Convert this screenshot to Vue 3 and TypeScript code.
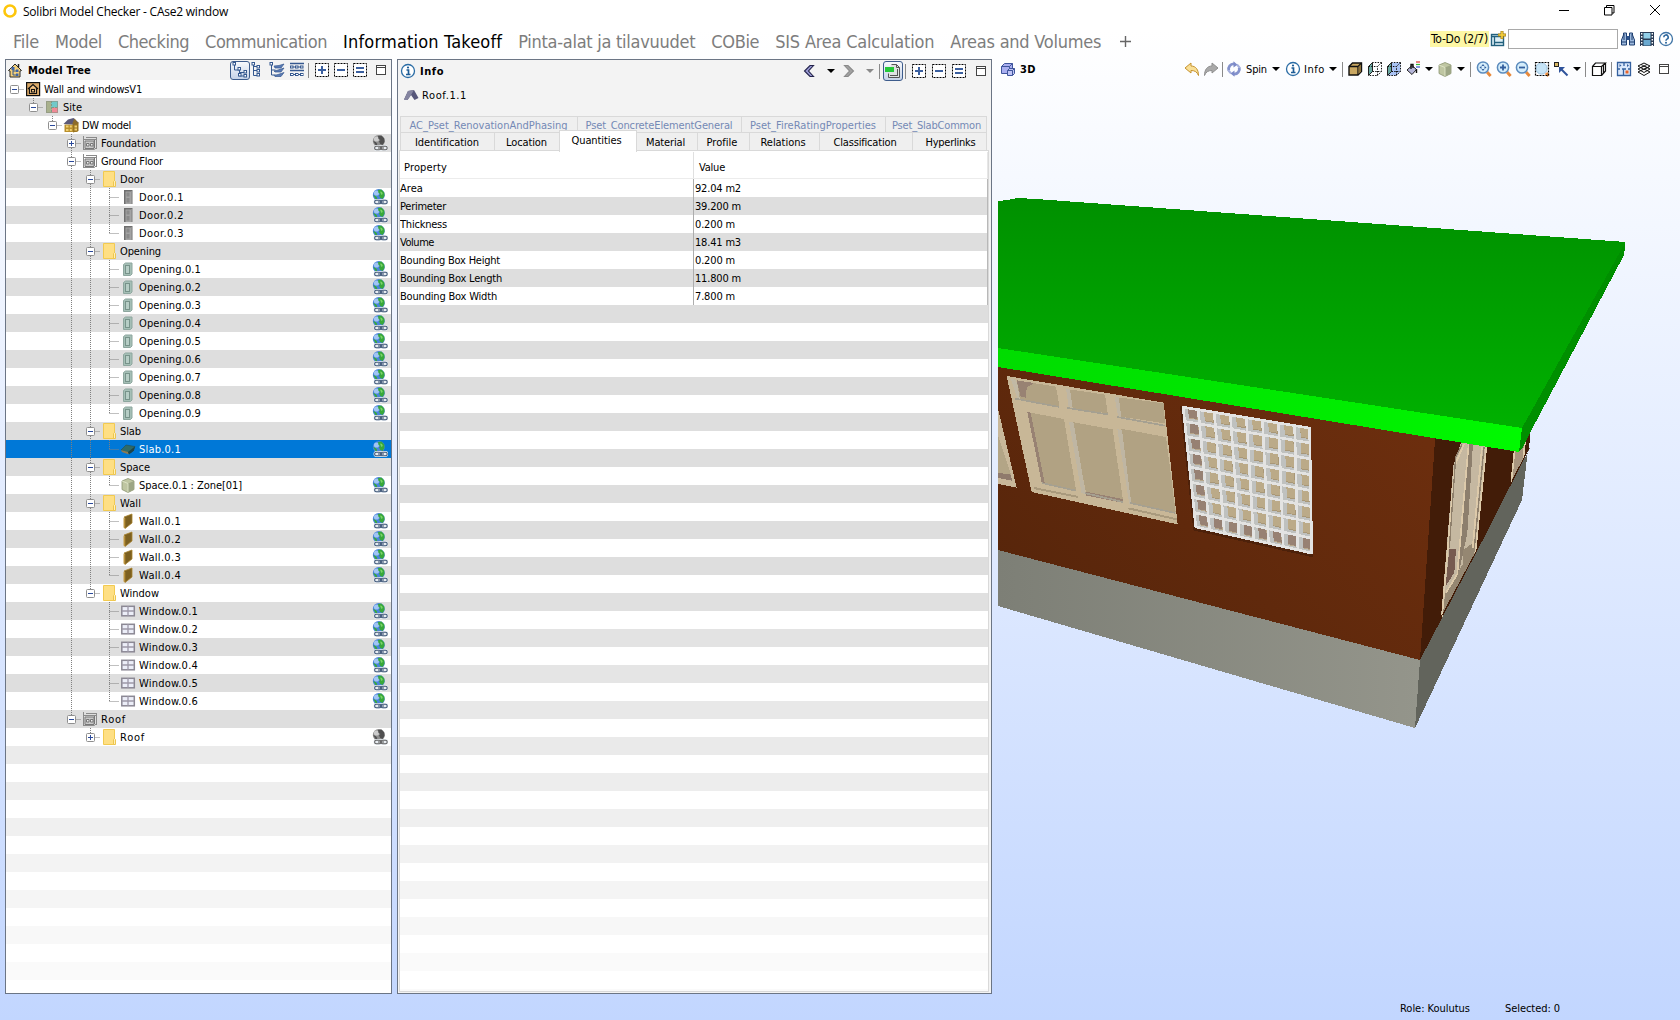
<script setup lang="ts">
import type { Directive } from 'vue'

interface Node { name: string; w: number; icon: string; link?: 'on' | 'off'; open?: boolean; kids?: Node[]; selected?: boolean }
interface Row { name: string; w: number; icon: string; link?: string; depth: number; last: boolean; lines: number[]; box: '' | '+' | '-'; selected: boolean }
interface Tool { kind: 'icon' | 'sep' | 'arrow' | 'text'; span: number; icon?: string; text?: string; w?: number }

// Tracks a label out to its nominal width.
const vFit: Directive<HTMLElement, number> = {
  mounted(el, binding) {
    const n = (el.textContent ?? '').length
    if (n) el.style.letterSpacing = `${(binding.value - el.getBoundingClientRect().width) / n}px`
  },
}

const series = (base: string, w: number, icon: string, n: number): Node[] =>
  Array.from({ length: n }, (_, i) => ({ name: `${base}.0.${i + 1}`, w, icon, link: 'on' as const }))

const tree: Node = {
  name: 'Wall and windowsV1', w: 98, icon: 'project', kids: [{
    name: 'Site', w: 19, icon: 'site', kids: [{
      name: 'DW model', w: 49, icon: 'building', kids: [
        { name: 'Foundation', w: 55, icon: 'storey', link: 'off', kids: [], open: false },
        {
          name: 'Ground Floor', w: 62, icon: 'storey', kids: [
            { name: 'Door', w: 24, icon: 'folder', kids: series('Door', 45, 'door', 3) },
            { name: 'Opening', w: 41, icon: 'folder', kids: series('Opening', 62, 'opening', 9) },
            { name: 'Slab', w: 21, icon: 'folder', kids: [{ name: 'Slab.0.1', w: 42, icon: 'slab', link: 'on', selected: true }] },
            { name: 'Space', w: 30, icon: 'folder', kids: [{ name: 'Space.0.1 : Zone[01]', w: 103, icon: 'space', link: 'on' }] },
            { name: 'Wall', w: 21, icon: 'folder', kids: series('Wall', 42, 'wall', 4) },
            { name: 'Window', w: 39, icon: 'folder', kids: series('Window', 59, 'window', 6) },
          ],
        },
        { name: 'Roof', w: 25, icon: 'storey', kids: [{ name: 'Roof', w: 25, icon: 'folder', link: 'off', kids: [], open: false }] },
      ],
    }],
  }],
}

const rows: Row[] = []
function walk(n: Node, depth: number, last: boolean, lines: number[]) {
  rows.push({ name: n.name, w: n.w, icon: n.icon, link: n.link, depth, last, lines, box: n.kids ? (n.open === false ? '+' : '-') : '', selected: !!n.selected })
  n.kids?.forEach((k, i, all) => walk(k, depth + 1, i === all.length - 1, last ? lines : [...lines, depth]))
}
walk(tree, 0, true, [])

const shade = (y: number) => {
  const v = Math.round(222 + 28 * Math.min(1, Math.max(0, (y - 560) / 400)))
  return `rgb(${v},${v},${v})`
}
const treeFill = Array.from({ length: 14 }, (_, i) => ((i + 37) % 2 ? shade(80 + (i + 37) * 18) : '#fff'))
const infoFill = Array.from({ length: 39 }, (_, i) => ((i + 7) % 2 ? shade(179 + (i + 7) * 18) : '#fff'))

const menu = [
  { t: 'File', w: 26 }, { t: 'Model', w: 47 }, { t: 'Checking', w: 71 }, { t: 'Communication', w: 122 },
  { t: 'Information Takeoff', w: 159, on: true }, { t: 'Pinta-alat ja tilavuudet', w: 177 }, { t: 'COBie', w: 48 },
  { t: 'SIS Area Calculation', w: 159 }, { t: 'Areas and Volumes', w: 151 },
]
const psets = [
  { t: 'AC_Pset_RenovationAndPhasing', w: 158, c: 'p1' }, { t: 'Pset_ConcreteElementGeneral', w: 147, c: 'p2' },
  { t: 'Pset_FireRatingProperties', w: 126, c: 'p3' }, { t: 'Pset_SlabCommon', w: 89, c: 'p4' },
]
const tabs = [
  { t: 'Identification', w: 64, c: 't1' }, { t: 'Location', w: 41, c: 't2' }, { t: 'Quantities', w: 50, c: 't3' },
  { t: 'Material', w: 39, c: 't4' }, { t: 'Profile', w: 31, c: 't5' }, { t: 'Relations', w: 45, c: 't6' },
  { t: 'Classification', w: 63, c: 't7' }, { t: 'Hyperlinks', w: 50, c: 't8' },
]
const props = [
  ['Area', 23, '92.04 m2', 46], ['Perimeter', 46, '39.200 m', 46], ['Thickness', 47, '0.200 m', 40], ['Volume', 34, '18.41 m3', 46],
  ['Bounding Box Height', 100, '0.200 m', 40], ['Bounding Box Length', 102, '11.800 m', 46], ['Bounding Box Width', 97, '7.800 m', 40],
] as [string, number, string, number][]

const I = (icon: string, span = 19): Tool => ({ kind: 'icon', icon, span })
const S = (span = 5): Tool => ({ kind: 'sep', span })
const D = (span = 15): Tool => ({ kind: 'arrow', span })
const viewTools: Tool[] = [
  I('undo'), I('redo'), S(4), I('spin', 20), { kind: 'text', text: 'Spin', w: 21, span: 24 }, D(), I('info'),
  { kind: 'text', text: 'Info', w: 21, span: 23 }, D(), S(), I('solid', 20), I('wire'), I('trans'), I('paint', 20), D(12),
  I('space'), D(14), S(), I('zfit', 21), I('zin'), I('zout'), I('zsel'), I('goto'), D(13), S(), I('cut', 21), S(4),
  I('floor', 22), I('layers', 17), I('max', 24),
]

const dash = '<rect x="1.5" y="1.5" width="13" height="13" fill="#fff" stroke="#000" stroke-dasharray="2 1"/>'
const lens = '<path d="M11 11l3.6 4" stroke="#e88a3c" stroke-width="3"/><circle cx="7" cy="6.5" r="5.6" fill="#d5edfb" stroke="#5b8bbd" stroke-width="1.5"/>'
const chain = (c: string) => `<g fill="none" stroke="#e8edf2" stroke-width="3.4"><rect x="3.2" y="11.6" width="5.6" height="2.6" rx="1.3"/><rect x="9.6" y="11.6" width="5" height="2.6" rx="1.3"/></g><g fill="none" stroke="${c}" stroke-width="1.1"><rect x="2.6" y="11.2" width="6.4" height="3.6" rx="1.8"/><rect x="9" y="11.2" width="6.2" height="3.6" rx="1.8"/><path d="M6 13h6"/></g>`
const nodes = (x: number, y: number) => `<rect x="${x}" y="${y}" width="2.500" height="2.500" fill="#fff" stroke="#35588f"/>`
const icons: Record<string, string> = {
  project: '<rect x="1.6" y="1.6" width="13" height="13" fill="#dba968" stroke="#111" stroke-width="1.2"/><path d="M3 8l5-4.5L13 8M4.5 7.5v5h7v-5" fill="#f0c284" stroke="#111" stroke-width="1.2"/><rect x="6.5" y="8.5" width="3" height="2.5" fill="none" stroke="#111"/>',
  site: '<rect x="2" y="2" width="12" height="12" fill="#a9b18d"/><rect x="7" y="2" width="7" height="6" fill="#71c9c9"/><rect x="8" y="8.5" width="6" height="5.5" fill="#f08a96"/><path d="M7.5 2v12M8 8.5h6" stroke="#7d9a88" stroke-dasharray="2 1"/><rect x="2.5" y="2.5" width="11" height="11" fill="none" stroke="#8b8f80" stroke-opacity=".6"/>',
  building: '<path d="M1.500 7.500h13v7.500h-13z" fill="#b98f2c"/><path d="M10 7l5.5-2v9L10 15.500z" fill="#987322"/><path d="M0.500 7l4.500-4.500L10.500 1l5 4.500-5 2z" fill="#5c5a78"/><path d="M9 7.500l2.500-6 4 5z" fill="#8d6c2a"/><g fill="#f0d070"><rect x="3" y="8.500" width="2.500" height="2"/><rect x="6.800" y="8.500" width="2" height="2"/><rect x="3" y="12" width="2.500" height="2"/><rect x="6.800" y="12" width="2" height="2"/><rect x="11.500" y="8.500" width="2.500" height="2"/><rect x="11.500" y="11.500" width="2.500" height="2"/></g>',
  storey: '<path d="M1 14.500h11.500l2-2V2.500" fill="none" stroke="#8d8d8d"/><path d="M1.500 1v14M14.500 2v12M1 4.500h13M4 2.500h11" stroke="#8a8a8a" fill="none"/><path d="M3 6h9v7.500H3z" fill="#c9c9c9" stroke="#787878"/><path d="M4.500 8.500h2.500v2.500H4.500zM8.500 8.500h2.500v2.500H8.500z" fill="#eee" stroke="#777"/><path d="M12.500 5v8" stroke="#777"/>',
  folder: '<path d="M2.500 .500h11v15h-11z" fill="#fedf84" stroke="#f2ca50"/><path d="M14.500 15.500h-2v-5l1-1 1 1z" fill="#fff0b8" stroke="#edc54e"/>',
  door: '<rect x="4" y="1" width="8.500" height="14" fill="#6e6e6e"/><rect x="5.500" y="2.500" width="5.500" height="12.500" fill="#a3a3a3"/><rect x="6.500" y="3.500" width="3" height="4" fill="#8a8a8a"/><rect x="6.500" y="9" width="3" height="4.500" fill="#8a8a8a"/><path d="M12 2v13" stroke="#b5b5b5"/>',
  opening: '<path d="M3.500 3.500l2-1.500h6.500v11l-1.500 1.500h-7z" fill="#a5bfb6" stroke="#8da69e"/><rect x="5.500" y="4.500" width="4" height="8" fill="#b6cdc5" stroke="#77938a"/>',
  slab: '<path d="M1 9l5-5 9 1.500-3 5.500-4 1z" fill="#2f6b67" stroke="#274f52" stroke-width=".6"/><path d="M1 9l7 2 1 2.500-7-2.500z" fill="#8e7b52"/><path d="M8 11l7-5.500-1 4-5 4z" fill="#1f4448"/>',
  space: '<path d="M2 4l6-2.500 6 2.500v8.500L8 15.500 2 12.500z" fill="#bfc6a2" stroke="#8b9471" stroke-width=".8"/><path d="M8 6.500l6-2.500v8.500l-6 3z" fill="#9da685"/><path d="M2 4l6 2.500v9" fill="none" stroke="#e0e5c8" stroke-width=".9"/>',
  wall: '<path d="M3.500 4.500l1.500 1v10l-1.500-1z" fill="#c39a45"/><path d="M4 4L12 1v9l-7 5.500V5z" fill="#7c6021" stroke="#a8832f" stroke-width=".8"/>',
  window: '<rect x="1.800" y="3.300" width="12.500" height="9.500" fill="#eceef8" stroke="#8b8894" stroke-width="1.500"/><path d="M8 3v10M2 8h12" stroke="#9d99a8" stroke-width="1.300"/>',
  on: '<circle cx="6.800" cy="6" r="6" fill="#4a83dc"/><circle cx="4.500" cy="4" r="2.600" fill="#b5d6fa" opacity=".8"/><path d="M6 1l3.500-.5 2.800 3 .2 3.500-2 3-2.500-1.200-1-2.500 1.500-1.300-2-1zM1.200 6l2.500 1 1.600 2-1 2.200z" fill="#38a83a"/><path d="M8 2.500l2 .5.800 2-1.500 1z" fill="#7ad468"/>' + chain('#3c5577'),
  off: '<circle cx="6.800" cy="6" r="6" fill="#8e8e8e"/><circle cx="4.500" cy="4" r="2.600" fill="#dcdcdc" opacity=".8"/><path d="M6 1l3.500-.5 2.800 3 .2 3.500-2 3-2.500-1.200-1-2.500 1.500-1.300-2-1zM1.200 6l2.500 1 1.600 2-1 2.200z" fill="#505050"/>' + chain('#606060'),
  home: '<path d="M1.500 8.500L8 2l6.500 6.500-1.500.5v6H3V9z" fill="#f3cf79" stroke="#2a2a2a"/><path d="M11.500 2v3.500" stroke="#222" stroke-width="1.500"/><path d="M6 6v7h4M6 9h4" fill="none" stroke="#35588f"/><g fill="#3c64a8"><rect x="4.500" y="5" width="3" height="3"/><rect x="9" y="7.500" width="2.500" height="2.500"/><rect x="9" y="11.500" width="2.500" height="2.500"/></g>',
  tree1: '<path d="M2.500 3v5h5M7.500 7v7h5M7.500 10.500h5" fill="none" stroke="#35588f"/>' + nodes(1, .5) + nodes(6, 5.5) + nodes(12, 8.500) + nodes(12, 12.500) + nodes(6.500, 11.500),
  tree2: '<path d="M5.500 3v10.500h4M5.500 8.500h4M5.500 4.500h4" fill="none" stroke="#35588f"/>' + nodes(4, .5) + nodes(9, 3.5) + nodes(9, 7.500) + nodes(9, 11.500),
  tree3: '<path d="M2.500 3v10h4M2.500 8h4" fill="none" stroke="#35588f"/>' + nodes(1, .5) + '<path d="M5 4l5-.500 5-1.500-3 4H6zM5 9l4-1 6-2-3 4H6zM5 13.500l4-1 6-2-3 4H6z" fill="#5b7cb5" stroke="#35588f" stroke-width=".7"/>',
  tree4: '<path d="M1 1.500h14M1 8.500h14" stroke="#35588f" stroke-width="1.600"/><path d="M3 5h10M3 12.500h10" stroke="#35588f"/><g fill="#fff" stroke="#35588f"><rect x="1.500" y="4" width="2.500" height="2"/><rect x="6.500" y="4" width="2.500" height="2"/><rect x="11.500" y="4" width="2.500" height="2"/><rect x="1.500" y="11.500" width="2.500" height="2"/><rect x="6.500" y="11.500" width="2.500" height="2"/><rect x="11.500" y="11.500" width="2.500" height="2"/></g>',
  plus: dash + '<path d="M4 8h8M8 4v8" stroke="#3a5f9f" stroke-width="2"/>',
  minus: dash + '<path d="M4 8h8" stroke="#3a5f9f" stroke-width="2"/>',
  equal: dash + '<path d="M4 6h8M4 10h8" stroke="#3a5f9f" stroke-width="2"/>',
  max: '<rect x="3.500" y="3.500" width="9" height="9" fill="#fff" stroke="#444"/><path d="M3 5.500h10" stroke="#444"/>',
  info: '<circle cx="8" cy="8" r="6.500" fill="#fff" stroke="#2a6ca5" stroke-width="1.300"/><path d="M6.500 7h2v4.500M6 11.500h4.500" stroke="#1d5c96" stroke-width="1.700" fill="none"/><circle cx="8" cy="4.500" r="1.100" fill="#1d5c96"/>',
  roof: '<path d="M1 12.500L5 4l6-1 4.500 8-4 2L8 8l-3.500 5z" fill="#56567a"/><path d="M5 4l6-1-3 5-3.500 5H1z" fill="#8484a0"/>',
  back: '<path d="M9 2.500h3.500L7.500 8l5 5.500H9L3.500 8z" fill="#9a9ad4" stroke="#22224a" stroke-width="1.100"/>',
  fwd: '<path d="M7 2.500H3.500L8.500 8l-5 5.500H7L12.500 8z" fill="#a2a2a2" stroke="#8a8a8a" stroke-width="1.100"/>',
  page: '<path d="M6.500 1.500h5l3 3v10h-11v-4" fill="#dfe3e2" stroke="#555"/><path d="M11.500 1.500v3h3M5 12.500h7M12.500 6v7" fill="none" stroke="#555"/><rect x="0" y="4" width="9" height="5" fill="#24c93a"/>',
  cubes: '<path d="M1.500 5.500l3-3h8v7l-3 3h-8z" fill="#a9aef0" stroke="#3f559c"/><path d="M1.500 5.500h8v7M9.500 5.500l3-3" fill="none" stroke="#3f559c"/><path d="M7.500 9.500l2-2h5v5l-2 2h-5z" fill="#c0c4f6" stroke="#3f559c"/><path d="M7.500 9.500h5v5M12.500 9.500l2-2" fill="none" stroke="#3f559c"/>',
  undo: '<path d="M1 7l6-5v3c5 0 7.500 4 7.500 9.500C13 11 11 9.500 7 9.500V12z" fill="#f9df96" stroke="#c5922f"/>',
  redo: '<path d="M15 7L9 2v3C4 5 1.500 9 1.500 14.500 3 11 5 9.500 9 9.500V12z" fill="#a9a9a9" stroke="#8f8f8f"/>',
  spin: '<path d="M2.800 9.500A5.200 5.200 0 0 1 8 2.800M13.200 6.500A5.200 5.200 0 0 1 8 13.200" fill="none" stroke="#8492cc" stroke-width="2.800"/><path d="M7.500 .2l4 3.500-4 2.800zM8.500 9.500l-4 3 4 3.300z" fill="#7c8ac8"/><path d="M11 3.500l2.500 3M5 12.500l-2.500-3" stroke="#a5afdc" stroke-width="2"/>',
  solid: '<path d="M2 5.500l3.500-3.500h9v8.500L11 14H2z" fill="#caa862" stroke="#111" stroke-width="1.400"/><path d="M2 5.500h9V14M11 5.500L14.500 2" fill="none" stroke="#111" stroke-width="1.300"/><path d="M11.500 6l2.500-2.500v7l-2.500 2.500z" fill="#8b713c"/>',
  wire: '<path d="M1.500 5.500l4-4v9l-4 4z" fill="#6aa9a2" stroke="#222"/><path d="M1.500 5.500h9v9h-9M10.500 5.500l4-4h-9M14.500 1.500v9l-4 4M5.500 10.500h9" fill="none" stroke="#111" stroke-dasharray="1.500 1.200"/>',
  trans: '<path d="M1.500 5.500l4-4h9v9l-4 4h-9z" fill="#a9c3f4"/><path d="M1.500 5.500l4-4v9l-4 4z" fill="#6aa9a2" stroke="#222"/><path d="M1.500 5.500h9v9h-9M10.500 5.500l4-4h-9M14.500 1.500v9l-4 4M5.500 10.500h9" fill="none" stroke="#111" stroke-dasharray="1.500 1.200"/>',
  paint: '<path d="M2 9l5-4.500 4.500 4L7 13.500z" fill="#b4b5d8" stroke="#222"/><path d="M6 8V3.500h2V7M11.500 8v4" fill="none" stroke="#111" stroke-width="1.400"/><path d="M11 1h4" stroke="#d33" stroke-width="1.200"/><path d="M11 3.500h4" stroke="#3b3" stroke-width="1.200"/><path d="M11 6h4" stroke="#35c" stroke-width="1.200"/>',
  zfit: lens + '<path d="M7 3L8.500 5h-3zM7 10L5.500 8h3zM3.500 6.500L5.500 5v3zM10.500 6.500L8.500 8V5z" fill="#345f9e"/>',
  zin: lens + '<path d="M4 6.500h6M7 3.500v6" stroke="#345f9e" stroke-width="1.800"/>',
  zout: lens + '<path d="M4 6.500h6" stroke="#345f9e" stroke-width="1.800"/>',
  zsel: '<path d="M12 12l2.500 3" stroke="#e88a3c" stroke-width="3"/><circle cx="7.500" cy="7.500" r="5.600" fill="#c6e4f7" stroke="#9cc3e0"/><rect x="1.500" y="1.500" width="13" height="13" fill="none" stroke="#000" stroke-width="1.200" stroke-dasharray="2 1"/>',
  goto: '<rect x="1.500" y="1.500" width="4" height="4" fill="#d8b762" stroke="#222"/><path d="M14.500 14.500L8 8" stroke="#2f539b" stroke-width="2"/><path d="M6 6h6L6 12z" fill="#2f539b"/>',
  cut: '<path d="M1.500 5.500h9v9h-9zM1.500 5.500l3-3.500h10l-4 3.500M14.500 2v8l-4 4.500M12.500 4v8" fill="#fff" stroke="#111" stroke-width="1.200"/>',
  floor: '<path d="M1.500 1.500h13v13h-13z" fill="#dbe8fb" stroke="#35619f" stroke-width="1.300"/><path d="M1 8h3M6 8h4M7.500 8v6M12 8h3M8 1v4" stroke="#35619f" stroke-width="1.300"/><rect x="9.500" y="9.500" width="3" height="3" fill="#e8642b"/><path d="M3.500 3v3l2-1.500zM11 3v3l2-1.500z" fill="#35619f"/>',
  layers: '<path d="M2 11l6-3 6 3-6 3.500zM2 8l6-3 6 3-6 3.500zM2 5l6-3 6 3-6 3.500z" fill="#fff" stroke="#111"/><path d="M5 6.500l6-3M5 3.500l6 3M8 8l5-2" stroke="#111" stroke-width=".8"/>',
  todo: '<rect x="1.500" y="3.500" width="12" height="11" fill="#dff0f8" stroke="#23617e" stroke-width="1.400"/><path d="M1 5.500h13M4.500 6v9M5 11.500h9" stroke="#23617e" stroke-width="1.300"/><path d="M12 0v8M8 4h8" stroke="#a17c18" stroke-width="3"/><path d="M12 .500v7M8.500 4h7" stroke="#f5cf3d" stroke-width="1.600"/>',
  find: '<path d="M1.500 14v-5l2-5V2h3v12zM14.500 14v-5l-2-5V2h-3v12z" fill="#9db9dd" stroke="#1f3f70"/><path d="M6.500 5h3v4h-3z" fill="#2c528c"/><path d="M1.500 11h5M9.500 11h5M4 3v6M12 3v6" stroke="#1f3f70"/>',
  film: '<rect x="1" y="1" width="14" height="14" fill="#2b3c55"/><rect x="4.500" y="2" width="7" height="5.500" fill="#92cfe8"/><rect x="4.500" y="9" width="7" height="5.500" fill="#6aa9d0"/><path d="M2.700 2v13M13.300 2v13" stroke="#fff" stroke-width="1.400" stroke-dasharray="1.500 1.500"/>',
  help: '<circle cx="8" cy="8" r="6.500" fill="#fff" stroke="#3f74a6" stroke-width="1.300"/><path d="M5.800 6.200a2.200 2.200 0 1 1 3.200 1.900c-.800.4-1 .800-1 1.600" fill="none" stroke="#2d679e" stroke-width="1.600"/><circle cx="8" cy="11.700" r="1" fill="#2d679e"/>',
}

// Glass-block window: bilinear grid over its four projected corners.
const quad = [[576, 198], [962, 262], [968, 643], [615, 563]]
const at = (u: number, v: number) => [0, 1].map(k =>
  ((1 - u) * (1 - v) * quad[0][k] + u * (1 - v) * quad[1][k] + u * v * quad[2][k] + (1 - u) * v * quad[3][k]).toFixed(1)).join(',')
const cells = Array.from({ length: 64 }, (_, i) => {
  const c = i % 8, r = Math.floor(i / 8)
  const p = (a: number, b: number) => at((c + a) / 8, (r + b) / 8)
  return {
    lit: [p(0.36, 0.08), p(0.98, 0.08), p(0.98, 0.76), p(0.36, 0.76)].join(' '),
    inner: [p(0.36, 0.08), p(0.9, 0.08), p(0.9, 0.7), p(0.36, 0.7)].join(' '),
    dark: c === 0 || r === 7,
  }
})
const bars = Array.from({ length: 9 }, (_, i) => {
  const t = Math.min(0.992, Math.max(0.008, i / 8))
  return `M${at(t, 0)}L${at(t, 1)}M${at(0, t)}L${at(1, t)}`
}).join('')
</script>

<template>
  <div class="app">
    <header class="title">
      <svg class="logo" width="14" height="14"><circle cx="7" cy="7" r="5.500" fill="none" stroke="#fdc60b" stroke-width="2.600" /></svg>
      <span v-fit="205" class="caption">Solibri Model Checker - CAse2 window</span>
      <svg class="winbtns" width="104" height="14" fill="none" stroke="#000">
        <path d="M1 7.500h10M92 2l10 10M102 2L92 12" />
        <path d="M46.500 4.500h7.500v7.500h-7.500zM48.500 4V2.500h7.500V10h-2" />
      </svg>
    </header>

    <nav class="menu">
      <span v-for="m in menu" :key="m.t" class="mitem" :class="{ on: m.on }"><span v-fit="m.w" class="lab">{{ m.t }}</span></span>
      <svg class="add" width="11" height="11"><path d="M5.500 0v11M0 5.500h11" stroke="#666" stroke-width="1.400" /></svg>
      <div class="quick">
        <span class="todo"><span v-fit="57" class="lab">To-Do (2/7)</span></span>
        <svg width="16" height="16" v-html="icons.todo" />
        <input class="search" />
        <svg class="q1" width="16" height="16" v-html="icons.find" />
        <svg class="q2" width="16" height="16" v-html="icons.film" />
        <svg class="q3" width="16" height="16" v-html="icons.help" />
      </div>
    </nav>

    <main class="work">
      <section class="panel treepanel">
        <div class="phead">
          <svg width="16" height="16" v-html="icons.home" />
          <b class="lab ptitle" v-fit="63">Model Tree</b>
          <span class="pressed"><svg width="16" height="16" v-html="icons.tree1" /></span>
          <svg class="k2" width="16" height="16" v-html="icons.tree2" />
          <svg class="k3" width="16" height="16" v-html="icons.tree3" />
          <svg class="k4" width="16" height="16" v-html="icons.tree4" />
          <i class="vsep" />
          <svg v-for="k in ['plus', 'minus', 'equal']" :key="k" class="sel" width="16" height="16" v-html="icons[k]" />
          <svg class="pmax" width="16" height="16" v-html="icons.max" />
        </div>
        <div class="tree">
          <div v-for="(r, i) in rows" :key="i" class="row" :class="{ odd: i % 2, picked: r.selected }">
            <svg class="guides" :width="19 + r.depth * 19" height="18">
              <path v-for="l in r.lines" :key="l" class="dot" :d="`M${8.5 + l * 19} 0v18`" />
              <path v-if="r.depth" class="dot" :d="`M${8.5 + r.depth * 19} 0v${r.last ? 9 : 18}`" />
              <path class="dot" :d="`M${8.5 + r.depth * 19} 9.500h10`" />
              <g v-if="r.box">
                <rect :x="4.5 + r.depth * 19" y="5.500" width="8" height="8" rx="1" fill="#fff" stroke="#8f8f8f" />
                <path :d="`M${6 + r.depth * 19} 9.500h5${r.box === '+' ? 'm-2.500 -2.500v5' : ''}`" stroke="#2b4a9b" />
              </g>
            </svg>
            <svg class="ricon" width="16" height="16" v-html="icons[r.icon]" />
            <span class="lab" v-fit="r.w">{{ r.name }}</span>
            <svg v-if="r.link" class="rlink" width="16" height="16" v-html="icons[r.link]" />
          </div>
          <div v-for="(c, i) in treeFill" :key="'f' + i" class="row" :style="{ background: c }" />
        </div>
      </section>

      <section class="panel infopanel">
        <div class="phead ihead">
          <svg width="16" height="16" v-html="icons.info" />
          <b class="lab ititle" v-fit="24">Info</b>
          <svg class="nback" width="16" height="16" v-html="icons.back" />
          <i class="tri d1" />
          <svg class="nfwd" width="16" height="16" v-html="icons.fwd" />
          <i class="tri d2" />
          <i class="vsep" />
          <span class="pressed ip"><svg width="16" height="16" v-html="icons.page" /></span>
          <i class="vsep" />
          <svg v-for="k in ['plus', 'minus', 'equal']" :key="k" class="isel" width="16" height="16" v-html="icons[k]" />
          <svg class="imax" width="16" height="16" v-html="icons.max" />
        </div>
        <div class="object">
          <svg width="16" height="16" v-html="icons.roof" />
          <span class="lab" v-fit="45">Roof.1.1</span>
        </div>
        <div class="tabs upper">
          <span v-for="t in psets" :key="t.t" class="tab" :class="t.c"><span class="lab" v-fit="t.w">{{ t.t }}</span></span>
        </div>
        <div class="tabs">
          <span v-for="t in tabs" :key="t.t" class="tab" :class="t.c"><span class="lab" v-fit="t.w">{{ t.t }}</span></span>
        </div>
        <div class="sheet">
          <div class="thead"><span class="cname"><span class="lab" v-fit="43">Property</span></span><span class="cval"><span class="lab" v-fit="26">Value</span></span></div>
          <div class="tbody">
            <div v-for="(p, i) in props" :key="i" class="trow" :class="{ odd: i % 2 }">
              <span class="cname"><span class="lab" v-fit="p[1]">{{ p[0] }}</span></span>
              <span class="cval"><span class="lab" v-fit="p[3]">{{ p[2] }}</span></span>
            </div>
            <div v-for="(c, i) in infoFill" :key="'f' + i" class="fill" :style="{ background: c }" />
          </div>
        </div>
      </section>

      <section class="view">
        <div class="vhead">
          <svg width="16" height="16" v-html="icons.cubes" />
          <b class="lab vtitle" v-fit="16">3D</b>
          <div class="vtools">
            <span v-for="(t, i) in viewTools" :key="i" class="slot" :class="`slot-${t.kind}`" :style="{ width: t.span + 'px' }">
              <svg v-if="t.kind === 'icon'" width="16" height="16" v-html="icons[t.icon!]" />
              <i v-else-if="t.kind === 'sep'" class="vsep" />
              <i v-else-if="t.kind === 'arrow'" class="tri" />
              <span v-else class="lab" v-fit="t.w!">{{ t.text }}</span>
            </span>
          </div>
        </div>
        <svg class="scene" width="682" height="903" viewBox="998 90 682 903" shape-rendering="crispEdges">
          <defs>
            <linearGradient id="roof" x1="0" y1="0" x2="0" y2="1"><stop offset="0" stop-color="#009000" /><stop offset="1" stop-color="#00b100" /></linearGradient>
            <linearGradient id="edge"><stop offset="0" stop-color="#00dc00" /><stop offset=".7" stop-color="#00ee00" /><stop offset="1" stop-color="#00fa00" /></linearGradient>
            <linearGradient id="brick" x1="0" y1="1" x2="1" y2=".3"><stop offset="0" stop-color="#54240a" /><stop offset="1" stop-color="#6c2e0e" /></linearGradient>
            <linearGradient id="base"><stop offset="0" stop-color="#7d7f76" /><stop offset="1" stop-color="#94958b" /></linearGradient>
          </defs>
          <polygon points="998,550 1420,660 1415,728 998,606" fill="url(#base)" />
          <polygon points="1531,446 1528,450 1522,500 1415,728 1420,660" fill="#62645c" />
          <polygon points="1435,430 1531,425 1529,449 1488,530 1420,660" fill="#421c08" />
          <polygon points="998,360 1435,430 1435,440 1420,660 998,550" fill="url(#brick)" />
          <g transform="translate(990 340) scale(.33333)">
            <path d="M24 205L80 443L24 432z" fill="#c9b89a" /><path d="M24 285L64 405L24 398z" fill="#b3a586" /><path d="M24 398l38 6 5 18-43-8z" fill="#8f7a6c" />
            <path d="M50 108L521 188L563 553L125 456z" fill="#c8b797" />
            <path d="M62 116l16 4 20 60-16-4z" fill="#c2b9a5" />
            <g fill="#b1a283">
              <path d="M80 121L198 140L208 198L90 178z" /><path d="M238 148L345 164L353 220L246 204z" /><path d="M384 172L521 190L525 250L392 230z" />
              <path d="M112 216L222 237L258 450L160 430z" /><path d="M245 246L368 268L400 487L288 458z" /><path d="M392 266L528 291L557 517L424 490z" />
            </g>
            <g fill="#988273"><path d="M80 121l52 8-22 14-2 30-16-4z" /><path d="M112 216l10 2 43 214-10-4z" /><path d="M288 455l110 22 1 12-110-22z" /></g>
            <g fill="#bfb6a3"><path d="M228 145l12 3 8 55-12-2zM374 170l12 2 8 58-10-1zM237 246l14 2 36 214-12-2zM382 268l14 2 28 222-6 0z" /></g>
            <g stroke="#a5a091" stroke-width="5" fill="none"><path d="M76 176L208 201M232 204L353 223M382 231L525 257M155 429L258 452M284 459L398 486M420 489L556 519" /></g>
            <g stroke="#a99a7d" stroke-width="6"><path d="M132 444L265 471M415 505L560 538" /></g>
            <path d="M570 198L610 571L968 652V640L618 560L580 200z" fill="#4d210a" />
            <polygon :points="`${quad[0]} ${quad[1]} ${quad[2]} ${quad[3]}`" fill="#bfc1bf" />
            <g v-for="(c, i) in cells" :key="i">
              <polygon :points="c.lit" :fill="c.dark ? '#b7a68a' : '#a89777'" />
              <polygon :points="c.inner" :fill="c.dark ? '#978173' : '#bbaa88'" />
            </g>
            <path :d="bars" stroke="#e3e3e2" stroke-width="8" fill="none" />
          </g>
          <g transform="translate(1360 220) scale(.33333)">
            <path d="M305 660L382 660L347 998L243 1192L280 738z" fill="#c5b8a1" />
            <path d="M325 672h14L322 940 296 1060 290 1060z" fill="#8d7f6d" />
            <path d="M310 990l30-22 6 30-38 62zM256 1120l90-150v28L246 1186z" fill="#958772" />
            <path d="M268 988h20l-5 70-26 40z" fill="#765b50" />
            <path d="M312 672L284 738L246 1192M326 672L292 1062L258 1118M379 680L346 998M366 680L338 985" fill="none" stroke="#ddcaaa" stroke-width="5" />
            <path d="M306 672L287 712L268 985" fill="none" stroke="#8f806c" stroke-width="4" />
            <path d="M372 682L343 985" fill="none" stroke="#8f806c" stroke-width="4" />
            <path d="M243 1192L350 992" stroke="#421c08" stroke-width="3" />
            <path d="M462 690L498 655L491 713L453 785z" fill="#a8957f" /><path d="M464 690L454 785M496 655L490 715" stroke="#ddcaaa" stroke-width="5" />
          </g>
          <polygon points="998,201 1007,200 1017,198 1036,199 1625.500,242 1522,428 998,348" fill="url(#roof)" />
          <polygon points="1625.500,242 1624,255 1531,431 1522,449 1519,451 1522,428" fill="#008f00" />
          <polygon points="998,348 1522,428 1519,452 998,367" fill="url(#edge)" />
        </svg>
      </section>
    </main>

    <footer class="status">
      <span class="lab" v-fit="70">Role: Koulutus</span>
      <span class="lab sel0" v-fit="55">Selected: 0</span>
    </footer>
  </div>
</template>

<style>
body { margin: 0; }
</style>

<style scoped>
.app { width: 1680px; height: 1020px; overflow: hidden; display: flex; flex-direction: column; background: linear-gradient(#fff 3%, #c2d6ff); font: 11px/14px "DejaVu Sans Condensed", "DejaVu Sans", sans-serif; font-stretch: condensed; color: #000; }
svg { display: block; flex: none; }
.lab { display: inline-block; white-space: pre; flex: none; }
.title { height: 26px; flex: none; background: #fff; display: flex; align-items: center; }
.logo { margin: -4px 0 0 3px; }
.caption { display: inline-block; white-space: pre; margin: -2px 0 0 6px; font: 12px/16px "Open Sans", "Noto Sans", sans-serif; font-stretch: normal; }
.winbtns { margin: -7px 18px 0 auto; }
.menu { height: 33px; flex: none; display: flex; align-items: center; padding-left: 13px; font-size: 18px; line-height: 24px; color: #7d7d7d; }
.mitem { display: flex; margin: -2px 16px 0 0; }
.mitem.on { color: #000; }
.add { margin-left: 3px; margin-top: -3px; }
.quick { margin-left: auto; padding-right: 6px; height: 21px; margin-top: -7px; display: flex; align-items: center; font-size: 11px; line-height: 16px; color: #000; }
.todo { background: #fdf7a5; width: 58px; height: 16px; padding-left: 1px; margin-right: 1px; font-size: 12px; display: flex; }
.search { width: 108px; height: 18px; border: 1px solid #a9a9a9; background: #fff; padding: 0; margin: 0 0 0 2px; flex: none; }
.q1 { margin-left: 2px; } .q2 { margin-left: 3px; } .q3 { margin-left: 3px; }
.work { display: flex; height: 935px; flex: none; align-items: stretch; }
.panel { box-sizing: border-box; border: 1px solid #6b7585; display: flex; flex-direction: column; background: #f3f3f3; flex: none; overflow: hidden; }
.treepanel { width: 387px; margin-left: 5px; }
.phead { height: 20px; flex: none; display: flex; align-items: center; padding-left: 1px; }
.ptitle { margin: 2px 0 0 5px; }
.pressed { box-sizing: border-box; width: 20px; height: 19px; border: 1px solid #3d5c8c; border-radius: 3px; background: linear-gradient(#f7f9fc, #c6d3e8); display: flex; align-items: center; justify-content: center; margin-left: auto; flex: none; }
.k2 { margin-left: -2px; } .k3 { margin-left: 5px; } .k4 { margin-left: 4px; }
.vsep { width: 1px; height: 15px; background: #8a8a8a; flex: none; }
.treepanel .vsep { margin: 0 4px 0 3px; }
.sel { margin-left: 2px; }
.sel ~ .sel { margin-left: 3px; }
.vsep + .sel { margin-left: 1px; }
.pmax { margin: 0 2px 0 5px; }
.tree { flex: 1; overflow: hidden; background: #fff; display: flex; flex-direction: column; }
.row { height: 18px; flex: none; display: flex; align-items: center; }
.row .lab { margin-top: 2px; }
.odd { background: #dedede; }
.row.picked { background: #0078d7; color: #fff; }
.guides { overflow: visible; }
.dot { stroke: #808080; stroke-dasharray: 1 1; fill: none; }
.ricon { margin-right: 3px; }
.rlink { margin-left: auto; margin-right: 3px; }
.infopanel { width: 595px; margin-left: 5px; }
.ihead { height: 22px; padding-left: 2px; }
.ititle { margin-left: 4px; margin-top: 1px; }
.tri { width: 0; height: 0; border: 4px solid transparent; border-top-color: #000; border-bottom: 0; flex: none; }
.nback { margin-left: 357px; margin-right: 10px; }
.nfwd { margin-left: 6px; margin-right: 9px; }
.d2 { border-top-color: #8a8a8a; margin-right: 5px; }
.pressed.ip { width: 20px; height: 20px; margin: 0 2px 0 3px; }
.isel { margin-left: 4px; }
.vsep + .isel { margin-left: 5px; }
.imax { margin-left: 6px; }
.object { height: 34px; display: flex; align-items: flex-start; padding: 5px 0 0 5px; box-sizing: border-box; flex: none; }
.object .lab { margin: 2px 0 0 3px; }
.tabs { display: flex; margin-left: 2px; width: 587px; height: 18px; box-sizing: border-box; border: 1px solid #d9d9d9; border-bottom: 0; background: #efefef; flex: none; line-height: 19px; }
.tabs.upper { height: 16px; color: #7489b5; line-height: 18px; overflow: hidden; }
.tab { box-sizing: border-box; display: flex; justify-content: center; border-right: 1px solid #d9d9d9; flex: none; padding-right: 1px; }
.tab:last-child { border-right: 0; }
.p1 { width: 177px; } .p2 { width: 164px; } .p3 { width: 144px; } .p4 { flex: 1; padding-left: 2px; }
.t1 { width: 94px; } .t2 { width: 64px; border-right: 0; } .t4 { width: 61px; padding-right: 3px; } .t5 { width: 52px; padding-right: 3px; } .t6 { width: 70px; padding-right: 3px; } .t7 { width: 93px; padding-right: 2px; } .t8 { flex: 1; padding: 0 0 0 2px; }
.t3 { width: 78px; height: 22px; margin-top: -3px; background: #fff; border: 1px solid #d9d9d9; border-bottom: 0; position: relative; z-index: 1; padding-right: 3px; }
.sheet { margin: 0 2px 1px 1px; flex: 1; min-height: 0; border: 1px solid #d9d9d9; background: #fff; display: flex; flex-direction: column; overflow: hidden; }
.thead { display: flex; height: 27px; margin-top: 1px; box-sizing: border-box; border-bottom: 1px solid #ececec; line-height: 32px; flex: none; }
.tbody { flex: 1; overflow: hidden; }
.trow, .fill { height: 18px; display: flex; line-height: 20px; }
.cname { width: 294px; border-right: 1px solid #adadad; flex: none; display: flex; box-sizing: border-box; }
.cval { flex: 1; border-right: 1px solid #b8b8b8; display: flex; padding-left: 1px; }
.thead .cname { padding-left: 4px; border-right-color: #e0e0e0; }
.thead .cval { padding-left: 5px; border-right-color: #e6e6e6; }
.view { width: 682px; margin-left: 6px; display: flex; flex-direction: column; flex: none; }
.vhead { height: 20px; display: flex; align-items: center; padding-left: 2px; flex: none; }
.vtitle { margin: 1px 0 0 4px; }
.vtools { margin-left: auto; margin-right: 4px; display: flex; align-items: center; }
.slot { display: flex; justify-content: center; align-items: center; flex: none; }
.slot-text { justify-content: flex-start; box-sizing: border-box; padding: 1px 0 0 2px; }
.scene { margin-top: 11px; }
.status { flex: 1; display: flex; align-items: flex-start; padding: 8px 0 0 1400px; }
.sel0 { margin-left: 35px; }
</style>
